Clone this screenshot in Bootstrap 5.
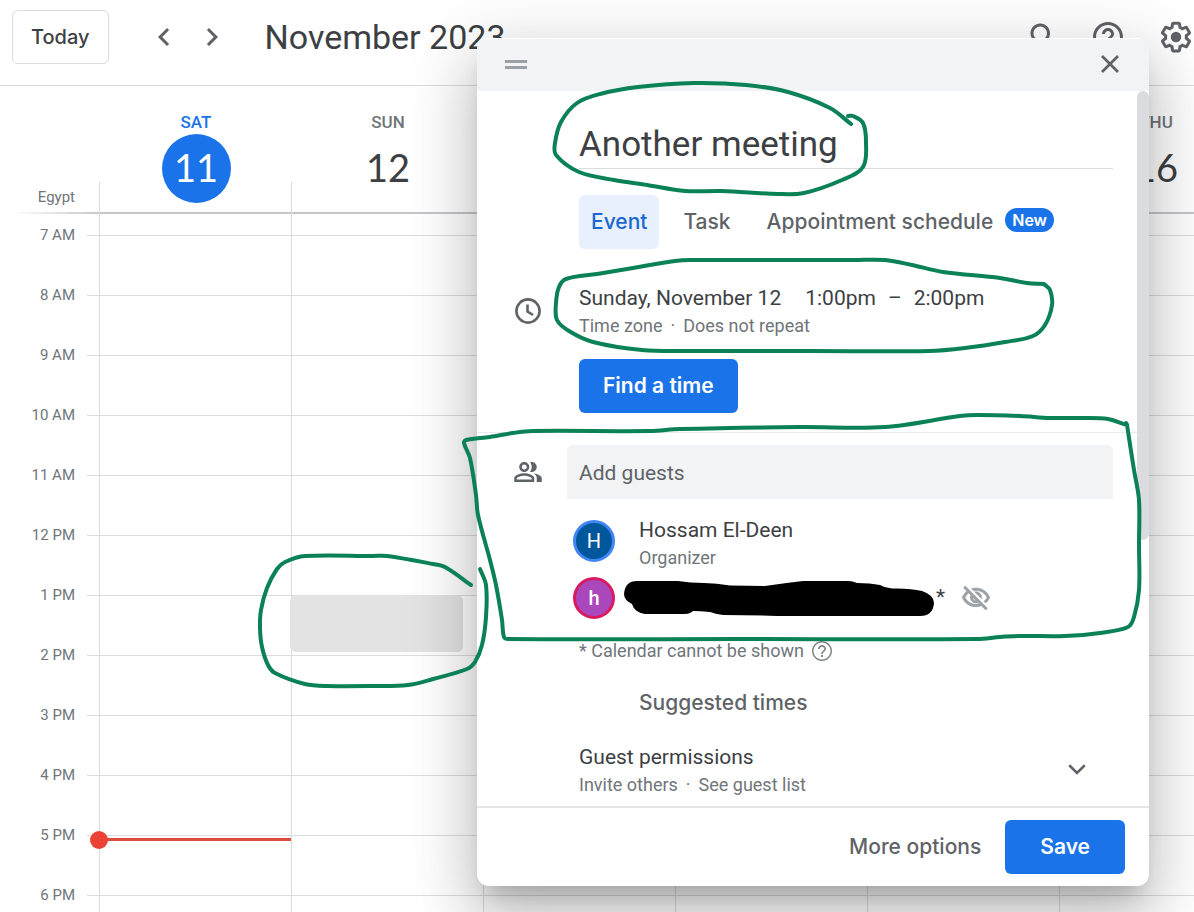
<!DOCTYPE html>
<html lang="en">
<head>
<meta charset="utf-8">
<meta name="viewport" content="width=device-width, initial-scale=1">
<title>Calendar - November 2023</title>
<link href="https://cdn.jsdelivr.net/npm/bootstrap@5.3.0/dist/css/bootstrap.min.css" rel="stylesheet">
<script src="https://cdn.jsdelivr.net/npm/bootstrap@5.3.0/dist/js/bootstrap.bundle.min.js" defer></script>
<style>
  :root { --ink:#3c4043; --muted:#70757a; --soft:#5f6368; --rule:#dadce0; --blue:#1a73e8; --pen:#0b8157; }
  body { font-family: Roboto, "Liberation Sans", sans-serif; color: var(--ink); background:#fff; overflow:hidden; min-height:100vh; }
  .plain { background:none; border:0; padding:0; color:inherit; text-align:left; }
  .topbar { height:86px; border-bottom:1px solid var(--rule); padding:10px 0 0 12px; }
  .today-btn { height:54px; padding:0 18px; font-family:Inter, sans-serif; font-weight:500; font-size:20px; color:var(--ink); border:1px solid var(--rule); border-radius:6px; background:#fff; }
  .icon-btn { width:48px; height:54px; display:flex; align-items:center; justify-content:center; }
  .week-nav { margin-left:31px; }
  .month { font-size:34px; line-height:54px; margin:0 0 0 29px; font-weight:400; }
  .tools { margin-right:-6px; gap:20px; }
  .search-btn { padding-left:8px; }
  .week-grid { display:grid; grid-template-columns:repeat(7,minmax(192px,1fr)); }
  .gutter { width:99px; flex:none; }
  .dayhead { height:128px; }
  .zone { font-size:15px; line-height:20px; color:var(--muted); padding-right:24px; margin-bottom:7px; }
  .daycell { position:relative; padding:25px 0 0 2px; font-size:17px; line-height:22px; font-weight:500; color:var(--muted); }
  .daycell::after { content:""; position:absolute; left:0; bottom:0; height:32px; border-left:1px solid var(--rule); }
  .daynum { width:69px; height:69px; margin-top:1px; border-radius:50%; font-family:Lato, sans-serif; font-size:38px; line-height:66px; font-weight:400; color:var(--ink); text-align:center; }
  .is-today { color:var(--blue); }
  .is-today .daynum { background:var(--blue); color:#fff; }
  .head-rule { height:2px; background:linear-gradient(90deg,transparent 12px,#c4c6c9 100px); margin-top:-2px; }
  .hours { position:relative; overflow:hidden; }
  .hour-list { margin-top:-9px; }
  .hour-row { height:60px; }
  .hour-row span { width:75px; margin-right:12px; text-align:right; font-size:15px; color:var(--muted); }
  .hour-row i { height:1px; background:var(--rule); flex:1; }
  .hour-cols { position:absolute; inset:0 0 0 99px; }
  .hour-col { position:relative; border-left:1px solid var(--rule); }
  .now-line { position:absolute; top:624px; left:0; right:0; height:3px; background:#db4c3f; }
  .now-line::before { content:""; position:absolute; left:-10px; top:-7px; width:18px; height:18px; border-radius:50%; background:#ea4335; }
  .draft { position:absolute; top:381px; left:-2px; right:20px; height:57px; border-radius:6px; background:#e3e3e3; }
  .event-dialog { position:absolute; top:38px; right:45px; width:672px; background:#fff; border-radius:12px; overflow:hidden; box-shadow:0 36px 57px 4px rgba(0,0,0,.14),0 14px 69px 12px rgba(0,0,0,.12),0 16px 22px -10px rgba(0,0,0,.2); }
  .drag-bar { height:53px; background:#f1f3f4; padding:0 27px 2px 28px; border-top:1px solid #fff; }
  .dialog-body { position:relative; padding:28px 36px 8px 102px; }
  .thumb { position:absolute; right:0; top:0; width:12px; height:449px; border-radius:6px; background:var(--rule); }
  .title-input { width:100%; height:50px; border:0; border-bottom:1px solid var(--rule); padding:2px 0 0; font-size:35px; line-height:44px; color:var(--ink); outline:0; }
  .kinds { margin-top:26px; gap:12px; }
  .kind { height:54px; padding:0 12px; font-family:Inter, sans-serif; font-size:21px; font-weight:500; color:var(--soft); border-radius:6px; background:none; border:0; }
  .kind.active { background:#e8f0fe; color:#1967d2; }
  .new-pill { background:var(--blue); color:#fff; font-family:Inter, sans-serif; font-size:16px; line-height:24px; font-weight:600; padding:0 7px; border-radius:12px; margin:-4px 0 0 -12px; }
  .when { margin:36px 0 20px; }
  .row-icon { width:30px; margin-left:-66px; margin-right:36px; flex:none; }
  .line-main { font-size:21px; line-height:27px; }
  .line-sub { font-size:18px; line-height:27px; color:var(--muted); }
  .fill-btn { height:54px; background:var(--blue); color:#fff; border:0; border-radius:6px; font-family:Inter, sans-serif; font-size:21px; font-weight:600; padding:0 24px; }
  .fill-btn.wide { padding:0 35px; }
  .section-rule { height:1px; background:#e8eaed; margin:19px -24px 12px -102px; }
  .guest-input { height:54px; flex:1; margin-left:-12px; border:0; border-radius:6px 6px 0 0; background:#f1f3f4; padding:2px 12px 0; font-size:21px; outline:0; color:var(--ink); }
  .guest-input::placeholder { color:var(--soft); opacity:1; }
  .guest-list { margin:13px 0 11px; }
  .guest { height:57px; }
  .guest-name { padding-top:7px; }
  .avatar { width:42px; height:42px; flex:none; border-radius:50%; border:3px solid #4285f4; background:#01579b; color:#fff; font-size:20px; margin:0 24px 0 -6px; }
  .avatar.away { border-color:#d81b60; background:#ab47bc; font-weight:500; margin-right:9px; }
  .star { padding-left:2px; }
  .text-btn { font-family:Inter, sans-serif; font-size:21px; font-weight:500; color:var(--soft); }
  .suggest { height:54px; margin:12px 0 14px 60px; display:block; }
  .expand-btn { height:50px; margin:0 12px 4px 0; }
  .dialog-foot { height:80px; border-top:2px solid #e4e5e7; padding-right:24px; gap:24px; }
  .pen-layer { position:absolute; left:0; top:0; width:1194px; height:912px; pointer-events:none; stroke:var(--pen); }
</style>
</head>
<body class="position-relative">
<header class="topbar d-flex align-items-start">
  <button class="today-btn">Today</button>
  <nav class="week-nav d-flex" aria-label="Week">
    <button class="plain icon-btn" aria-label="Previous week"><svg width="36" height="36" viewBox="0 0 24 24" fill="#5f6368"><path d="M15.41 7.41 14 6l-6 6 6 6 1.41-1.41L10.83 12z"/></svg></button>
    <button class="plain icon-btn" aria-label="Next week"><svg width="36" height="36" viewBox="0 0 24 24" fill="#5f6368"><path d="M10 6 8.59 7.41 13.17 12l-4.58 4.59L10 18l6-6z"/></svg></button>
  </nav>
  <h1 class="month">November 2023</h1>
  <div class="tools d-flex ms-auto">
    <button class="plain icon-btn search-btn" aria-label="Search"><svg class="flex-shrink-0" width="36" height="36" viewBox="0 0 24 24" fill="#5f6368"><path d="M20.49 19l-5.73-5.73C15.53 12.2 16 10.91 16 9.5 16 5.91 13.09 3 9.5 3S3 5.91 3 9.5 5.91 16 9.5 16c1.41 0 2.7-.47 3.77-1.24L19 20.49 20.49 19zM5 9.5C5 7.01 7.01 5 9.5 5S14 7.01 14 9.5 11.99 14 9.5 14 5 11.99 5 9.5z"/></svg></button>
    <button class="plain icon-btn" aria-label="Help"><svg width="36" height="36" viewBox="0 0 24 24" fill="#5f6368"><path d="M11 18h2v-2h-2v2zm1-16C6.48 2 2 6.48 2 12s4.48 10 10 10 10-4.48 10-10S17.52 2 12 2zm0 18c-4.41 0-8-3.59-8-8s3.59-8 8-8 8 3.59 8 8-3.59 8-8 8zm0-14c-2.21 0-4 1.79-4 4h2c0-1.1.9-2 2-2s2 .9 2 2c0 2-3 1.75-3 5h2c0-2.25 3-2.5 3-5 0-2.21-1.79-4-4-4z"/></svg></button>
    <button class="plain icon-btn" aria-label="Settings"><svg width="36" height="36" viewBox="0 0 24 24" fill="#5f6368"><path d="M13.85 22.25h-3.7c-.74 0-1.36-.54-1.45-1.27l-.27-1.89c-.27-.14-.53-.29-.79-.46l-1.8.72c-.7.26-1.47-.03-1.81-.65L2.2 15.53c-.35-.66-.2-1.44.36-1.88l1.53-1.19c-.01-.15-.02-.3-.02-.46 0-.15.01-.31.02-.46l-1.52-1.19c-.59-.45-.74-1.26-.37-1.88l1.85-3.19c.34-.62 1.11-.9 1.79-.63l1.81.73c.26-.17.52-.32.78-.46l.27-1.91c.09-.7.71-1.25 1.44-1.25h3.7c.74 0 1.36.54 1.45 1.27l.27 1.89c.27.14.53.29.79.46l1.8-.72c.71-.26 1.48.03 1.82.65l1.84 3.18c.36.66.2 1.44-.36 1.88l-1.52 1.19c.01.15.02.3.02.46s-.01.31-.02.46l1.52 1.19c.56.45.72 1.23.37 1.86l-1.86 3.22c-.34.62-1.11.9-1.8.63l-1.8-.72c-.26.17-.52.32-.78.46l-.27 1.91c-.1.68-.72 1.22-1.46 1.22zm-3.23-2h2.76l.37-2.55.53-.22c.44-.18.88-.44 1.34-.78l.45-.34 2.38.96 1.38-2.4-2.03-1.58.07-.56c.03-.26.06-.51.06-.78s-.03-.53-.06-.78l-.07-.56 2.03-1.58-1.39-2.4-2.39.96-.45-.35c-.42-.32-.87-.58-1.33-.77l-.52-.22-.37-2.55h-2.76l-.37 2.55-.53.21c-.44.19-.88.44-1.34.79l-.45.33-2.38-.95-1.39 2.39 2.03 1.58-.07.56a7 7 0 0 0-.06.79c0 .26.02.53.06.78l.07.56-2.03 1.58 1.38 2.4 2.39-.96.45.35c.43.33.86.58 1.33.77l.53.22.38 2.55z"/><circle cx="12" cy="12" r="3.5"/></svg></button>
  </div>
</header>

<main>
  <div class="dayhead d-flex overflow-hidden">
    <div class="gutter d-flex align-items-end justify-content-end"><span class="zone">Egypt</span></div>
    <div class="week-grid flex-grow-1">
      <div class="daycell is-today d-flex flex-column align-items-center">SAT<div class="daynum">11</div></div>
      <div class="daycell d-flex flex-column align-items-center">SUN<div class="daynum">12</div></div>
      <div class="daycell"></div>
      <div class="daycell"></div>
      <div class="daycell"></div>
      <div class="daycell d-flex flex-column align-items-center">THU<div class="daynum">16</div></div>
      <div class="daycell"></div>
    </div>
  </div>
  <div class="head-rule"></div>
  <div class="hours">
    <div class="hour-list">
      <div class="hour-row d-flex align-items-center"><span>7 AM</span><i></i></div>
      <div class="hour-row d-flex align-items-center"><span>8 AM</span><i></i></div>
      <div class="hour-row d-flex align-items-center"><span>9 AM</span><i></i></div>
      <div class="hour-row d-flex align-items-center"><span>10 AM</span><i></i></div>
      <div class="hour-row d-flex align-items-center"><span>11 AM</span><i></i></div>
      <div class="hour-row d-flex align-items-center"><span>12 PM</span><i></i></div>
      <div class="hour-row d-flex align-items-center"><span>1 PM</span><i></i></div>
      <div class="hour-row d-flex align-items-center"><span>2 PM</span><i></i></div>
      <div class="hour-row d-flex align-items-center"><span>3 PM</span><i></i></div>
      <div class="hour-row d-flex align-items-center"><span>4 PM</span><i></i></div>
      <div class="hour-row d-flex align-items-center"><span>5 PM</span><i></i></div>
      <div class="hour-row d-flex align-items-center"><span>6 PM</span><i></i></div>
    </div>
    <div class="hour-cols week-grid">
      <div class="hour-col"><div class="now-line"></div></div>
      <div class="hour-col"><div class="draft"></div></div>
      <div class="hour-col"></div>
      <div class="hour-col"></div>
      <div class="hour-col"></div>
      <div class="hour-col"></div>
      <div class="hour-col"></div>
    </div>
  </div>
</main>

<section class="event-dialog" role="dialog" aria-label="New event">
  <div class="drag-bar d-flex align-items-center justify-content-between">
    <svg width="22" height="9" viewBox="0 0 22 9"><path d="M0 1.5h22M0 7.5h22" stroke="#9aa0a6" stroke-width="3"/></svg>
    <button class="plain d-flex" aria-label="Close"><svg width="24" height="24" viewBox="0 0 24 24" fill="none" stroke="#5f6368" stroke-width="2.7"><path d="M4 4l16 16M20 4L4 20"/></svg></button>
  </div>
  <div class="dialog-body">
    <div class="thumb"></div>
    <input class="title-input d-block" aria-label="Title" value="Another meeting">
    <div class="kinds d-flex align-items-center">
      <button class="kind active">Event</button>
      <button class="kind">Task</button>
      <button class="kind">Appointment schedule</button>
      <span class="new-pill">New</span>
    </div>
    <div class="when d-flex align-items-center">
      <svg class="row-icon" height="30" viewBox="0 0 30 30" fill="none" stroke="#5f6368" stroke-width="2.6"><circle cx="15" cy="14" r="11.6"/><path d="M14.5 7.5v7l5.5 3.5"/></svg>
      <div>
        <div class="line-main d-flex"><button class="plain">Sunday, November 12</button><button class="plain ms-4">1:00pm</button><span class="mx-2 px-1">–</span><button class="plain">2:00pm</button></div>
        <div class="line-sub d-flex"><button class="plain">Time zone</button><span class="mx-2">·</span><button class="plain">Does not repeat</button></div>
      </div>
    </div>
    <button class="fill-btn d-block">Find a time</button>
    <div class="section-rule"></div>
    <div class="d-flex align-items-center">
      <svg class="row-icon" height="30" viewBox="0 0 24 24" fill="#5f6368"><path d="M15 8c0-1.42-.5-2.73-1.33-3.76.42-.14.86-.24 1.33-.24 2.21 0 4 1.79 4 4s-1.79 4-4 4c-.43 0-.84-.09-1.23-.21-.03-.01-.06-.02-.1-.03A5.98 5.98 0 0 0 15 8zm1.66 5.13C18.03 14.06 19 15.32 19 17v3h4v-3c0-2.18-3.58-3.47-6.34-3.87zM9 4C6.79 4 5 5.79 5 8s1.79 4 4 4 4-1.79 4-4-1.79-4-4-4zm0 6c-1.1 0-2-.9-2-2s.9-2 2-2 2 .9 2 2-.9 2-2 2zm0 3c-2.67 0-8 1.34-8 4v3h16v-3c0-2.66-5.33-4-8-4zm6 5H3v-.99C3.2 16.29 6.3 15 9 15s5.8 1.29 6 2v1z"/></svg>
      <input class="guest-input" aria-label="Add guests" placeholder="Add guests">
    </div>
    <div class="guest-list">
      <div class="guest d-flex align-items-center">
        <span class="avatar d-flex align-items-center justify-content-center">H</span>
        <div class="guest-name"><div class="line-main">Hossam El-Deen</div><div class="line-sub">Organizer</div></div>
      </div>
      <div class="guest d-flex align-items-center">
        <span class="avatar away d-flex align-items-center justify-content-center">h</span>
        <svg width="310" height="36" viewBox="624 580 310 36"><path d="M624 594Q625 581 637 581H678Q690 583 704 583Q717 583 730 585.5Q748 586 765 586Q785 583 803 581H848Q853 581 857 583Q870 583 880 585Q885 588 892 588.5Q910 588 922 591Q934 595 934 603Q933 616 920 616H777Q750 615 723 615Q715 614 710 612Q700 611 693 611Q690 614 685 614H645Q634 612 632 604Q624 600 624 594z"/></svg>
        <span class="line-main star">*</span>
        <svg class="ms-3" width="30" height="30" viewBox="0 0 24 24" fill="#9aa0a6" stroke="#9aa0a6" stroke-width=".5"><path d="M12 6c3.79 0 7.17 2.13 8.82 5.5-.59 1.22-1.42 2.27-2.41 3.12l1.41 1.41c1.39-1.23 2.49-2.77 3.18-4.53C21.27 7.11 17 4 12 4c-1.27 0-2.49.2-3.64.57l1.65 1.65C10.66 6.09 11.32 6 12 6zm-1.07 1.14L13 9.21c.57.25 1.03.71 1.28 1.28l2.07 2.07c.08-.34.14-.7.14-1.07C16.5 9.01 14.48 7 12 7c-.37 0-.72.05-1.07.14zM2.01 3.87l2.68 2.68C3.06 7.83 1.77 9.53 1 11.5 2.73 15.89 7 19 12 19c1.52 0 2.98-.29 4.32-.82l3.42 3.42 1.41-1.41L3.42 2.45 2.01 3.87zm7.5 7.5l2.61 2.61c-.04.01-.08.02-.12.02-1.38 0-2.5-1.12-2.5-2.5 0-.05.01-.08.01-.13zm-3.4-3.4l1.75 1.75c-.23.55-.36 1.15-.36 1.78 0 2.48 2.02 4.5 4.5 4.5.63 0 1.23-.13 1.77-.36l.98.98c-.88.24-1.8.38-2.75.38-3.79 0-7.17-2.13-8.82-5.5.7-1.43 1.72-2.61 2.93-3.53z"/></svg>
      </div>
    </div>
    <div class="line-sub d-flex align-items-center">* Calendar cannot be shown<svg class="ms-2" width="20" height="20" viewBox="2 2 20 20" fill="#80868b"><path d="M11 18h2v-2h-2v2zm1-16C6.48 2 2 6.48 2 12s4.48 10 10 10 10-4.48 10-10S17.52 2 12 2zm0 18.5c-4.69 0-8.5-3.81-8.5-8.5S7.31 3.5 12 3.5s8.5 3.81 8.5 8.5-3.81 8.5-8.5 8.5zM12 6c-2.21 0-4 1.79-4 4h1.7c0-1.27 1.03-2.3 2.3-2.3s2.3 1.03 2.3 2.3c0 2-3.15 1.75-3.15 5h1.7c0-2.25 3.15-2.5 3.15-5 0-2.21-1.79-4-4-4z"/></svg></div>
    <button class="plain text-btn suggest">Suggested times</button>
    <div class="d-flex align-items-center justify-content-between">
      <div><div class="line-main">Guest permissions</div><div class="line-sub d-flex">Invite others<span class="mx-2">·</span>See guest list</div></div>
      <button class="plain icon-btn expand-btn" aria-label="Show guest permissions"><svg width="30" height="30" viewBox="0 0 24 24" fill="none" stroke="#5f6368" stroke-width="2"><path d="M5.8 9l6.2 6.2L18.2 9"/></svg></button>
    </div>
  </div>
  <div class="dialog-foot d-flex align-items-center justify-content-end">
    <button class="plain text-btn">More options</button>
    <button class="fill-btn wide">Save</button>
  </div>
</section>

<svg class="pen-layer" viewBox="0 0 1194 912" fill="none" stroke-width="4" stroke-linecap="round" stroke-linejoin="round" aria-hidden="true">
  <path data-points="851,124 830,108 788,92 746,85 694,83 638,87 600,94 577,103 561,122 555,143 556,155 579,172 614,180 647,185 685,191 722,191 778,194 804,193 842,180 863,167 866,142 863,123 853,116 848,116"/>
  <path data-points="1044,284 1027,283 1000,278 943,272 912,265 885,260 854,260 772,260 690,260 675,261 633,268 597,274 566,279 559,287 556,303 557,320 569,331 593,342 642,350 690,351 810,351 929,351 965,348 1005,342 1033,336 1045,325 1052,305 1050,290 1044,284"/>
  <path data-points="1126,423 1127,425 1108,419 1083,418 1050,418 1020,416 977,415 960,416 885,427 800,427 680,429 650,431 533,431 513,433 490,437 466,440 464,443 470,458 476,495 478,515 490,560 496,585 502,620 504,637 508,639 740,639 977,639 1000,637 1020,636 1065,636 1100,633 1128,627 1134,617 1139,590 1139,545 1139,500 1134,470 1127,425"/>
  <path data-points="471,585 445,567 433,564 387,556 373,556 305,556 285,562 277,569 267,588 261,610 260,628 262,647 268,665 275,673 305,684 328,686 373,686 408,685 433,679 467,669 475,662 482,645 486,617 486,585 480,569"/>
</svg>
<script>
  // Draw each pen stroke as a smooth curve through its recorded points.
  document.querySelectorAll('[data-points]').forEach(function (el) {
    var p = el.dataset.points.split(' ').map(function (s) { return s.split(',').map(Number); });
    var d = 'M' + p[0];
    for (var i = 0; i < p.length - 1; i++) {
      var a = p[i - 1] || p[i], b = p[i], c = p[i + 1], e = p[i + 2] || c;
      var len = Math.hypot(c[0] - b[0], c[1] - b[1]);
      var t1 = len / (3 * (Math.hypot(c[0] - a[0], c[1] - a[1]) || 1));
      var t2 = len / (3 * (Math.hypot(e[0] - b[0], e[1] - b[1]) || 1));
      d += 'C' + [b[0] + (c[0] - a[0]) * t1, b[1] + (c[1] - a[1]) * t1, c[0] - (e[0] - b[0]) * t2, c[1] - (e[1] - b[1]) * t2, c[0], c[1]].join(' ');
    }
    el.setAttribute('d', d);
  });
</script>
</body>
</html>
